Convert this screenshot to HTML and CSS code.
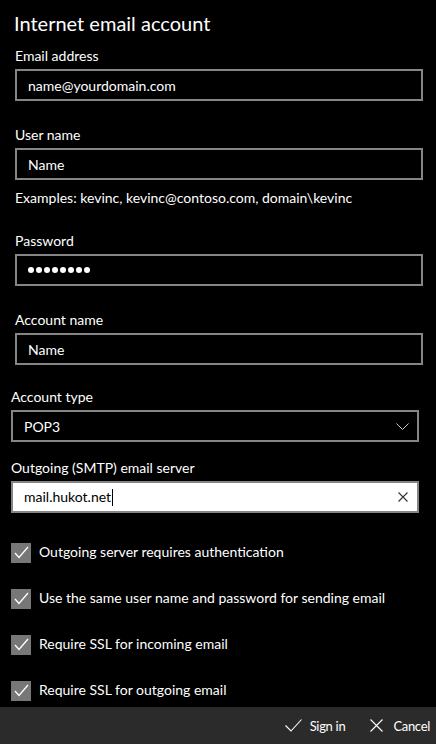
FILE: index.html
```html
<!DOCTYPE html>
<html lang="en">

<head>
    <meta charset="UTF-8">
    <meta name="viewport" content="width=device-width, initial-scale=1.0">
    <title>Internet email account</title>
    <link rel="stylesheet" href="styles.css">
</head>

<body>
    <div class="page">
        <div class="content">
            <h1 class="title">Internet email account</h1>

            <div class="group group-1">
                <div class="field field-email">
                    <div class="label">Email address</div>
                    <div class="textbox">name@yourdomain.com</div>
                </div>
                <div class="field field-user">
                    <div class="label">User name</div>
                    <div class="textbox">Name</div>
                    <div class="hint">Examples: kevinc, kevinc@contoso.com, domain\kevinc</div>
                </div>
                <div class="field field-password">
                    <div class="label">Password</div>
                    <div class="textbox password">
                        <span class="dots">
                            <i></i><i></i><i></i><i></i><i></i><i></i><i></i><i></i>
                        </span>
                    </div>
                </div>
                <div class="field field-account">
                    <div class="label">Account name</div>
                    <div class="textbox">Name</div>
                </div>
            </div>

            <div class="group group-2">
                <div class="field field-type">
                    <div class="label">Account type</div>
                    <div class="textbox select">
                        <span>POP3</span>
                        <svg class="chevron" width="13" height="7" viewBox="0 0 13 7">
                            <polyline points="0.5,0.5 6.5,6.5 12.5,0.5" fill="none" stroke="#c8c8c8" stroke-width="1" />
                        </svg>
                    </div>
                </div>
                <div class="field field-smtp">
                    <div class="label">Outgoing (SMTP) email server</div>
                    <div class="textbox focused">
                        <span>mail.hukot.net<span class="caret"></span></span>
                        <svg class="clear" width="10" height="10" viewBox="0 0 10 10">
                            <path d="M0.5 0.5 L9.5 9.5 M9.5 0.5 L0.5 9.5" stroke="#333" stroke-width="1.1" />
                        </svg>
                    </div>
                </div>

                <ul class="checks">
                    <li><span class="box"></span>Outgoing server requires authentication</li>
                    <li><span class="box"></span>Use the same user name and password for sending email</li>
                    <li><span class="box"></span>Require SSL for incoming email</li>
                    <li><span class="box"></span>Require SSL for outgoing email</li>
                </ul>
            </div>
        </div>

        <div class="bar">
            <div class="bar-btn sign-in">
                <svg width="17" height="13" viewBox="0 0 17 13">
                    <polyline points="0.5,6.5 6,12 16.5,0.5" fill="none" stroke="#fff" stroke-width="1.1" />
                </svg>
                <span>Sign in</span>
            </div>
            <div class="bar-btn cancel">
                <svg width="13" height="13" viewBox="0 0 13 13">
                    <path d="M0.5 0.5 L12.5 12.5 M12.5 0.5 L0.5 12.5" stroke="#fff" stroke-width="1.1" />
                </svg>
                <span>Cancel</span>
            </div>
        </div>
    </div>
</body>

</html>
```

FILE: styles.css
```css
/* dark theme colours */
:root {
    --bgColor: #000;
    --barColor: #2b2b2b;
    --borderColor: #858585;
    --checkColor: #777;
}

* {
    padding: 0;
    margin: 0;
    box-sizing: border-box;
}

body {
    height: 100vh;
    overflow: hidden;
    background-color: var(--bgColor);
    color: #fff;
    /* Lato 的字宽和 Segoe UI 最接近 */
    font-family: "Segoe UI", Lato, sans-serif;
    font-size: 14px;
}

.page {
    display: flex;
    flex-direction: column;
    height: 100vh;
}

.content {
    flex: 1;
    min-height: 0;
    overflow: hidden;
}

.title {
    padding: 9px 0 0 14px;
    font-size: 20px;
    font-weight: normal;
    line-height: 28px;
}

/* 两组输入框左右偏移不一样 */
.group-1 {
    padding: 0 13px 0 15px;
}

.group-2 {
    padding: 0 17px 0 11px;
}

.label,
.hint {
    line-height: 20px;
}

.label {
    margin-bottom: 3px;
}

.textbox {
    display: flex;
    justify-content: space-between;
    align-items: center;
    height: 32px;
    padding: 0 10px 0 11px;
    border: 2px solid var(--borderColor);
}

/* 密码圆点 */
.dots {
    display: flex;
    gap: 2px;
}

.dots i {
    width: 6px;
    height: 6px;
    border-radius: 50%;
    background-color: #fff;
}

.select {
    padding-right: 8px;
}

.focused {
    padding-right: 9px;
    background-color: #fff;
    color: #000;
}

.caret {
    display: inline-block;
    width: 1px;
    height: 17px;
    margin-left: 1px;
    vertical-align: -4px;
    background-color: #000;
}

.field-email {
    margin-top: 9px;
}

.field-user,
.field-account {
    margin-top: 24px;
}

.hint {
    margin-top: 8px;
}

.field-password {
    margin-top: 23px;
}

.field-type {
    margin-top: 22px;
}

.field-smtp {
    margin-top: 16px;
}

/* 复选框 start */
.checks {
    list-style: none;
    margin-top: 30px;
}

.checks li {
    display: flex;
    align-items: flex-start;
    gap: 8px;
    height: 20px;
    margin-bottom: 26px;
    line-height: 18px;
}

.checks .box {
    flex-shrink: 0;
    width: 20px;
    height: 20px;
    background-color: var(--checkColor);
    background-image: url("data:image/svg+xml,%3Csvg xmlns='http://www.w3.org/2000/svg' width='20' height='20'%3E%3Cpolyline points='4,10 8,14.5 17,4' fill='none' stroke='white' stroke-width='1.3'/%3E%3C/svg%3E");
}

/* 复选框 end */

/* 底部按钮栏 */
.bar {
    flex-shrink: 0;
    display: flex;
    justify-content: flex-end;
    align-items: center;
    height: 37px;
    padding-right: 6px;
    background-color: var(--barColor);
    font-size: 13px;
}

.bar-btn {
    display: flex;
    align-items: center;
    gap: 8px;
}

.bar-btn span {
    letter-spacing: -0.3px;
}

.sign-in {
    margin-right: 25px;
}

.cancel {
    gap: 10px;
}
```
